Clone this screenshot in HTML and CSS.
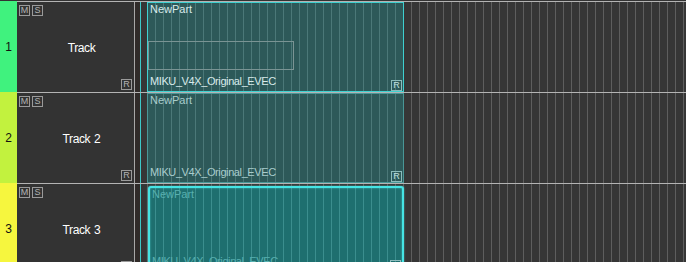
FILE: index.html
```html
<!DOCTYPE html>
<html lang="en">
<head>
<meta charset="UTF-8">
<title>Tracks</title>
<link rel="stylesheet" href="styles.css">
</head>
<body>

<div class="tracks">
    <div class="track">
        <div class="strip strip-green">1</div>
        <div class="lane">
            <div class="header">
                <div class="header-top"><span class="btn">M</span><span class="btn">S</span></div>
                <div class="track-name">Track</div>
                <div class="header-bottom"><span class="btn">R</span></div>
            </div>
            <div class="divider"></div>
            <div class="timeline">
                <div class="part part-selected">
                    <div class="part-title">NewPart</div>
                    <div class="part-bottom">
                        <span class="part-singer">MIKU_V4X_Original_EVEC</span>
                        <span class="btn btn-part">R</span>
                    </div>
                    <div class="select-rect"></div>
                </div>
            </div>
        </div>
    </div>

    <div class="track">
        <div class="strip strip-lime">2</div>
        <div class="lane">
            <div class="header">
                <div class="header-top"><span class="btn">M</span><span class="btn">S</span></div>
                <div class="track-name">Track 2</div>
                <div class="header-bottom"><span class="btn">R</span></div>
            </div>
            <div class="divider"></div>
            <div class="timeline">
                <div class="part">
                    <div class="part-title">NewPart</div>
                    <div class="part-bottom">
                        <span class="part-singer">MIKU_V4X_Original_EVEC</span>
                        <span class="btn btn-part">R</span>
                    </div>
                </div>
            </div>
        </div>
    </div>

    <div class="track">
        <div class="strip strip-yellow">3</div>
        <div class="lane">
            <div class="header">
                <div class="header-top"><span class="btn">M</span><span class="btn">S</span></div>
                <div class="track-name">Track 3</div>
                <div class="header-bottom"><span class="btn">R</span></div>
            </div>
            <div class="divider"></div>
            <div class="timeline">
                <div class="part part-hover">
                    <div class="part-title">NewPart</div>
                    <div class="part-bottom">
                        <span class="part-singer">MIKU_V4X_Original_EVEC</span>
                        <span class="btn btn-part">R</span>
                    </div>
                </div>
            </div>
        </div>
    </div>
</div>

</body>
</html>
```

FILE: styles.css
```css
body {
    margin: 0;
    background: #333;
    font-family: "Liberation Sans", Arial, sans-serif;
    overflow: hidden;
}
.tracks {
    padding-top: 1px;
}
.track {
    display: flex;
    height: 91px;
}
.strip {
    width: 17px;
    flex: none;
    display: flex;
    align-items: center;
    justify-content: center;
    font-size: 12px;
    color: #111;
}
.strip-green { background: #40f27e; }
.strip-lime { background: #c2f23e; }
.strip-yellow { background: #f6f63e; }
.lane {
    flex: 1;
    display: flex;
    border-top: 1px solid #b4b4b4;
}
.header {
    width: 118px;
    flex: none;
    box-sizing: border-box;
    background: #333;
    border-right: 1px solid #a8a8a8;
    padding: 3px 2px 2px 2px;
    display: grid;
    grid-template-rows: auto 1fr auto;
}
.header-top {
    display: flex;
    gap: 2px;
}
.header-bottom {
    display: flex;
    justify-content: flex-end;
}
.track-name {
    display: flex;
    align-items: center;
    justify-content: center;
    padding-left: 12px;
    color: #fff;
    font-size: 12px;
    letter-spacing: -0.4px;
    word-spacing: 1px;
}
.btn {
    display: inline-flex;
    align-items: center;
    justify-content: center;
    width: 11px;
    height: 11px;
    box-sizing: border-box;
    border: 1px solid #9a9a9a;
    color: #b4b4b4;
    font-size: 9px;
    line-height: 1;
}
.divider {
    width: 5px;
    flex: none;
    background: #302b29;
    border-right: 1px solid #3cc8c8;
}
.timeline {
    flex: 1;
    padding-left: 6px;
    background: #363636 repeating-linear-gradient(90deg, transparent 0 6px, #5e5e5e 6px 7px, transparent 7px 8px);
}

/* parts on the timeline */
.part {
    position: relative;
    width: 257px;
    height: 100%;
    box-sizing: border-box;
    border: 1px solid #4a9696;
    padding: 0 1px 0 2px;
    background: #2d5959 repeating-linear-gradient(90deg, transparent 0 7px, #4b7878 7px 8px);
    display: flex;
    flex-direction: column;
    justify-content: space-between;
    font-size: 11px;
    line-height: 13px;
    color: #a9cccc;
}
.part-selected {
    border-color: #3fd0d0;
    color: #d8eaea;
}
.part-hover {
    margin: 2px 0 0 1px;
    width: 256px;
    height: 87px;
    border: 2px solid #46e4e4;
    border-radius: 3px;
    box-shadow: 0 0 2px rgba(90, 255, 255, 0.6), inset 0 0 2px rgba(90, 255, 255, 0.6);
    background: #1e6f6f repeating-linear-gradient(90deg, transparent 0 5px, #3b8e8e 5px 6px, transparent 6px 8px);
    color: #58b0b0;
}
.part-bottom {
    display: flex;
    justify-content: space-between;
    align-items: flex-end;
}
.part-singer {
    margin-bottom: 3px;
    letter-spacing: -0.4px;
}
.btn-part {
    border-color: #8cbcbc;
    color: #c4e2e2;
}
.select-rect {
    position: absolute;
    left: 0;
    top: 38px;
    width: 146px;
    height: 29px;
    box-sizing: border-box;
    border: 1px solid #7a9494;
}
```
